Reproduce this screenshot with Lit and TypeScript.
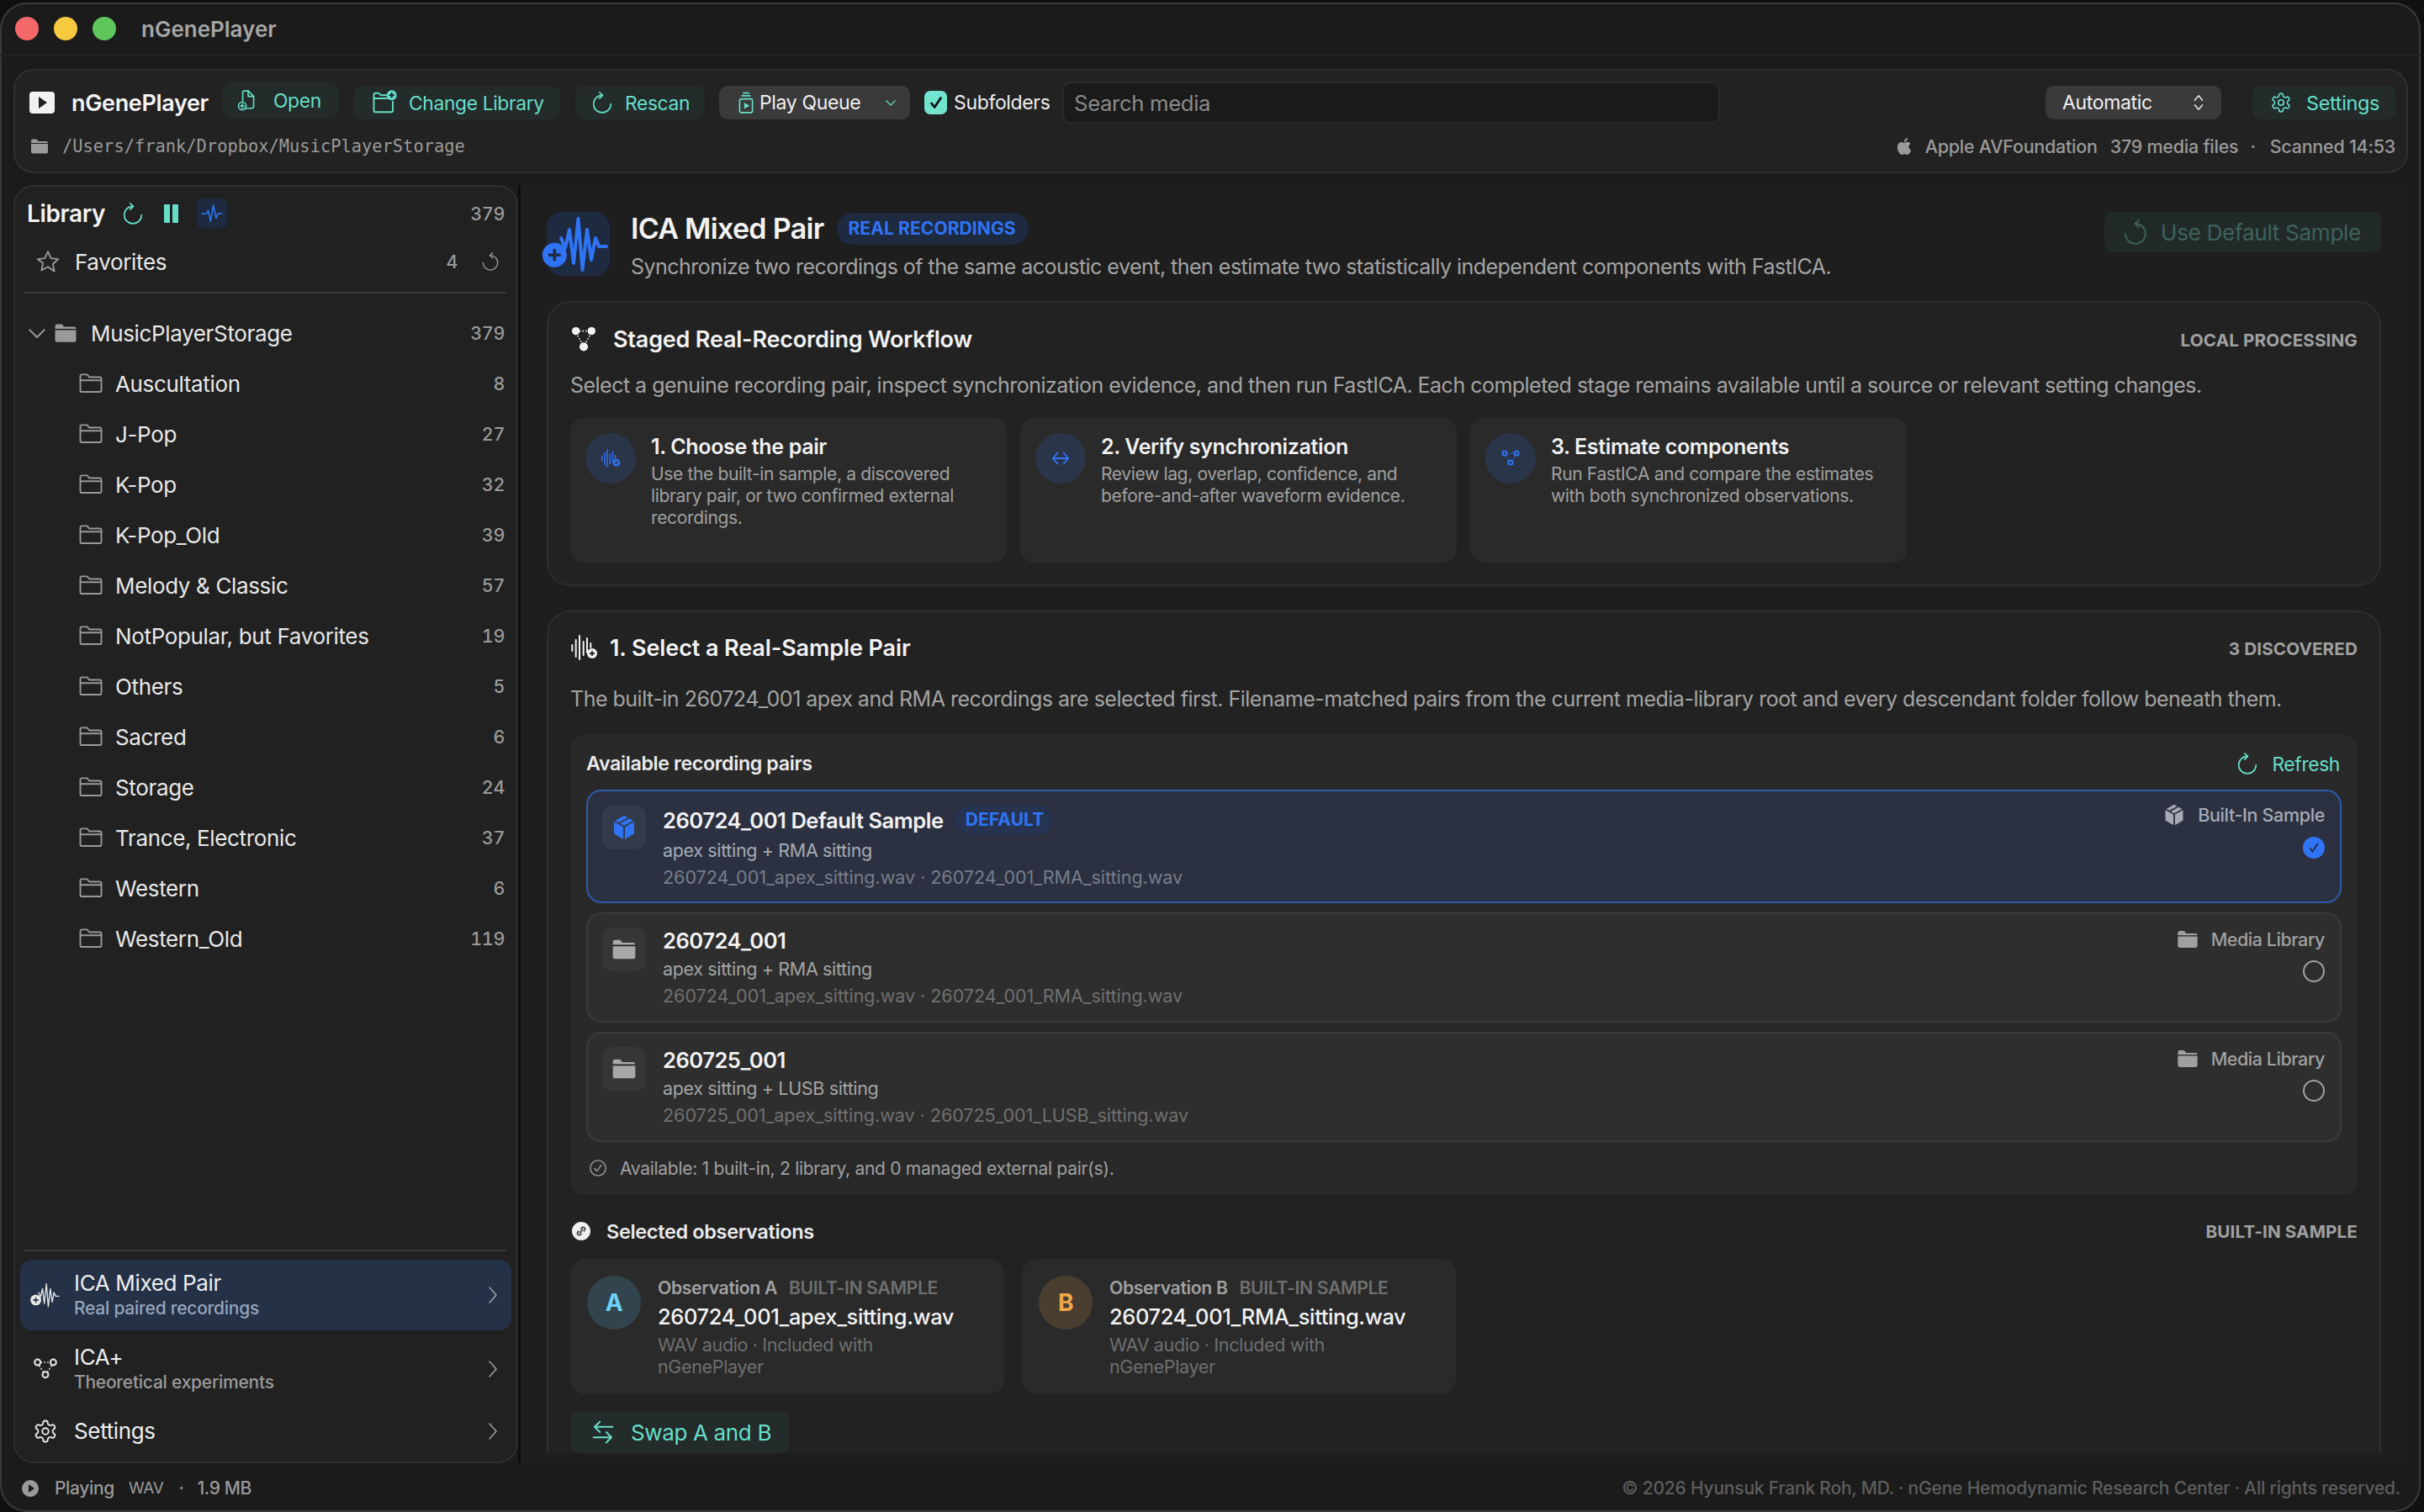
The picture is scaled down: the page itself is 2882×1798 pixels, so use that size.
import { LitElement, html, svg, css } from "lit";
import { customElement } from "lit/decorators.js";

const GEAR =
  "M12.22 2h-.44a2 2 0 0 0-2 2v.18a2 2 0 0 1-1 1.73l-.43.25a2 2 0 0 1-2 0l-.15-.08a2 2 0 0 0-2.73.73l-.22.38a2 2 0 0 0 .73 2.73l.15.1a2 2 0 0 1 1 1.72v.51a2 2 0 0 1-1 1.74l-.15.09a2 2 0 0 0-.73 2.73l.22.38a2 2 0 0 0 2.73.73l.15-.08a2 2 0 0 1 2 0l.43.25a2 2 0 0 1 1 1.73V20a2 2 0 0 0 2 2h.44a2 2 0 0 0 2-2v-.18a2 2 0 0 1 1-1.73l.43-.25a2 2 0 0 1 2 0l.15.08a2 2 0 0 0 2.73-.73l.22-.39a2 2 0 0 0-.73-2.73l-.15-.08a2 2 0 0 1-1-1.74v-.5a2 2 0 0 1 1-1.74l.15-.09a2 2 0 0 0 .73-2.73l-.22-.38a2 2 0 0 0-2.73-.73l-.15.08a2 2 0 0 1-2 0l-.43-.25a2 2 0 0 1-1-1.73V4a2 2 0 0 0-2-2z";
const APPLE =
  "M12.152 6.896c-.948 0-2.415-1.078-3.96-1.04-2.04.027-3.91 1.183-4.961 3.014-2.117 3.675-.546 9.103 1.519 12.09 1.013 1.454 2.208 3.09 3.792 3.039 1.52-.065 2.09-.987 3.935-.987 1.831 0 2.35.987 3.96.948 1.637-.026 2.676-1.48 3.676-2.948 1.156-1.688 1.636-3.325 1.662-3.415-.039-.013-3.182-1.221-3.22-4.857-.026-3.04 2.48-4.494 2.597-4.559-1.429-2.09-3.623-2.324-4.39-2.376-2-.156-3.675 1.09-4.61 1.09zM15.53 3.83c.843-1.012 1.4-2.427 1.245-3.83-1.207.052-2.662.805-3.532 1.818-.78.896-1.454 2.338-1.273 3.714 1.338.104 2.715-.688 3.559-1.701";

const ICONS: Record<string, unknown> = {
  refresh: svg`<path d="M12 4a9.500 9.500 0 1 0 9.500 9.500"></path><path d="M9 .8 12.500 4 9 7.500"></path>`,
  reset: svg`<path d="M12 4a9.500 9.500 0 1 1-9.500 9.500"></path><path d="M15 .8 11.500 4 15 7.500"></path>`,
  docPlus: svg`<path d="M9 21h8a2 2 0 0 0 2-2V8l-6-6H9a2 2 0 0 0-2 2v9"></path><path d="M13 2v6h6"></path><circle cx="6.500" cy="18.500" r="4.200"></circle><path d="M6.500 16.500v4M4.500 18.500h4"></path>`,
  folderPlus: svg`<path d="M14 5H8.500L6.800 3H3.500A1.500 1.500 0 0 0 2 4.500v15A1.500 1.500 0 0 0 3.500 21h15a1.500 1.500 0 0 0 1.500-1.500V11"></path><path d="M2 8h13"></path><circle cx="19" cy="5" fill="currentColor" r="4"></circle><path class="dark" d="M19 3v4M17 5h4"></path>`,
  queue: svg`<path d="M9 1.500h6M7.500 4.500h9"></path><rect x="5" y="8" width="14" height="15" rx="2"></rect><path class="solid" d="M10 12l6 3.500-6 3.500z"></path>`,
  gear: svg`<path d=${GEAR}></path><circle cx="12" cy="12" r="3"></circle>`,
  updown: svg`<path d="M7 9l5-6 5 6M7 15l5 6 5-6"></path>`,
  chevDown: svg`<path d="M5 9l7 7 7-7"></path>`,
  chevRight: svg`<path d="M8 3l8 9-8 9"></path>`,
  star: svg`<path d="M12 2.500l2.900 6.400 6.900.8-5.100 4.700 1.400 6.900L12 17l-6.100 3.300 1.400-6.900L2.200 9.700l6.900-.8z"></path>`,
  pulse: svg`<path d="M1 12h5l2-3.500 2.500 12L13.500 3l3 14 2-5H23"></path>`,
  folder: svg`<path d="M2 7V5a1.500 1.500 0 0 1 1.500-1.500h5L10.500 6h10A1.500 1.500 0 0 1 22 7.500v11a1.500 1.500 0 0 1-1.500 1.500h-17A1.500 1.500 0 0 1 2 18.500V7z"></path><path d="M2 9h20"></path>`,
  folderFill: svg`<path class="solid" d="M2 5.500A2 2 0 0 1 4 3.500h4.500L10.500 6H20a2 2 0 0 1 2 2v10.500a2 2 0 0 1-2 2H4a2 2 0 0 1-2-2z"></path><path class="cut" d="M2 8.500h20"></path>`,
  box: svg`<path class="solid" d="M11.200 11.500 3 7v10.500l8.200 5z"></path><path class="solid" d="M12.800 11.500 21 7v10.500l-8.200 5z"></path><path class="solid" d="M12 1.500l3 1.700-8 4.400-3-1.600zM16.500 4l3.500 2-8 4.400-3.500-1.900z"></path>`,
  check: svg`<path d="M6 13l4 5 8-12"></path>`,
  checkCircle: svg`<circle cx="12" cy="12" r="10"></circle><path d="M7.500 12.500l3 3.500 6-8"></path>`,
  swap: svg`<path d="M21 7H4M9 2 4 7l5 5M3 17h17M15 12l5 5-5 5"></path>`,
  arrows: svg`<path d="M8 5l-6 7 6 7M16 5l6 7-6 7M2 12h20"></path>`,
  nodes: svg`<circle cx="5" cy="6" r="2.600"></circle><circle cx="19" cy="6" r="2.600"></circle><circle cx="12" cy="17" r="2.600"></circle><path class="dash" d="M8 6h8M6.500 9l3.500 5.500M17.500 9 14 14.500"></path>`,
  nodesFill: svg`<circle class="solid" cx="5" cy="5" r="3.500"></circle><circle class="solid" cx="19" cy="5" r="3.500"></circle><circle class="solid" cx="12" cy="19" r="3.800"></circle><path class="dash" d="M8 5h8M6.500 9l4 7M17.500 9l-4 7"></path>`,
};

const icon = (name: string, cls = "") => html`<svg class="ic ${cls}" viewBox="0 0 24 24">${ICONS[name]}</svg>`;

// zigzag waveform with the plus badge, drawn in the hero tile and again small in the nav
const heroWave = (cls: string) => html`
  <svg class="wave ${cls}" viewBox="0 0 100 90">
    <polyline points="31,38 36,50 41,28 46,68 51.500,15 56.500,76 62,28 67,64 72,38 76,48 85,48"></polyline>
    <circle cx="23.300" cy="58.300" r="14.500"></circle>
    <path d="M23.300 51v14.600M16 58.300h14.600"></path>
  </svg>
`;

const BARS: [number, number, number][] = [
  [12.3, 16, 23],
  [16.7, 10, 30],
  [21, 5, 33],
  [25.7, 12, 28],
  [30, 8, 25],
  [34.3, 14, 19],
];

const barsIcon = (cls: string) => html`
  <svg class="bars ${cls}" viewBox="10 4 33 30">
    ${BARS.map(([x, a, b]) => svg`<line x1=${x} x2=${x} y1=${a} y2=${b}></line>`)}
    <circle cx="36" cy="26" r="6"></circle>
    <path d="M36 23v6M33 26h6"></path>
  </svg>
`;

const FOLDERS: [string, number][] = [
  ["Auscultation", 8],
  ["J-Pop", 27],
  ["K-Pop", 32],
  ["K-Pop_Old", 39],
  ["Melody & Classic", 57],
  ["NotPopular, but Favorites", 19],
  ["Others", 5],
  ["Sacred", 6],
  ["Storage", 24],
  ["Trance, Electronic", 37],
  ["Western", 6],
  ["Western_Old", 119],
];

const STEPS = [
  {
    icon: barsIcon("step-bars"),
    title: "1. Choose the pair",
    lines: ["Use the built-in sample, a discovered", "library pair, or two confirmed external", "recordings."],
  },
  {
    icon: icon("arrows", "s22"),
    title: "2. Verify synchronization",
    lines: ["Review lag, overlap, confidence, and", "before-and-after waveform evidence."],
  },
  {
    icon: icon("nodes", "s24"),
    title: "3. Estimate components",
    lines: ["Run FastICA and compare the estimates", "with both synchronized observations."],
  },
];

const PAIRS = [
  {
    title: "260724_001 Default Sample",
    badge: "DEFAULT",
    sub: "apex sitting + RMA sitting",
    files: "260724_001_apex_sitting.wav · 260724_001_RMA_sitting.wav",
    source: "Built-In Sample",
    selected: true,
  },
  {
    title: "260724_001",
    sub: "apex sitting + RMA sitting",
    files: "260724_001_apex_sitting.wav · 260724_001_RMA_sitting.wav",
    source: "Media Library",
  },
  {
    title: "260725_001",
    sub: "apex sitting + LUSB sitting",
    files: "260725_001_apex_sitting.wav · 260725_001_LUSB_sitting.wav",
    source: "Media Library",
  },
];

const OBSERVATIONS = [
  { key: "A", file: "260724_001_apex_sitting.wav" },
  { key: "B", file: "260724_001_RMA_sitting.wav" },
];

@customElement("app-root")
export class AppRoot extends LitElement {
  static styles = css`
    :host {
      display: block;
      width: 2882px;
      height: 1798px;
      overflow: hidden;
      background: #101010;
      font-family: Inter, "Noto Sans", sans-serif;
      color: #ececec;
      font-size: 25px;
      letter-spacing: -0.35px;
    }
    * { box-sizing: border-box; }
    .ic { display: block; flex: none; fill: none; stroke: currentColor; stroke-width: 1.5; stroke-linecap: round; stroke-linejoin: round; overflow: visible; }
    .ic .solid { fill: currentColor; stroke: none; }
    .ic .cut { stroke: #222; stroke-width: 1.2; }
    .ic .dash { stroke-dasharray: 1.2 1.6; stroke-linecap: butt; stroke-width: 1.2; }
    .ic .dark { stroke: #1c2638; stroke-width: 1.6; }
    .s18 { width: 18px; height: 18px; }
    .s20 { width: 20px; height: 20px; }
    .s22 { width: 22px; height: 22px; }
    .s24 { width: 24px; height: 24px; }
    .s26 { width: 26px; height: 26px; }
    .s28 { width: 28px; height: 28px; }
    .s30 { width: 30px; height: 30px; }
    .s32 { width: 32px; height: 32px; }

    .wave { display: block; flex: none; fill: none; stroke: currentColor; overflow: visible; stroke-linecap: round; stroke-linejoin: round; }
    .wave polyline { stroke-width: 4; }
    .wave circle { fill: currentColor; stroke: none; }
    .wave path { stroke: #1e2a40; stroke-width: 3.6; stroke-linecap: butt; }
    .wave.big { width: 100px; height: 90px; position: absolute; left: -14px; top: -7px; }
    .wave.mini { width: 45px; height: 40px; }
    .nav.active .wave path { stroke: #243147; }
    .nav.active .wave polyline { stroke-width: 3; }

    .bars { display: block; flex: none; overflow: visible; fill: none; stroke: currentColor; stroke-width: 2; stroke-linecap: round; }
    .bars circle { fill: currentColor; stroke: none; }
    .bars path { stroke: #222; stroke-width: 1.800; stroke-linecap: butt; }
    .bars.head { width: 33px; height: 30px; }
    .bars.step-bars { width: 24px; height: 22px; }
    .bars.step-bars path { stroke: #2b3549; }

    .window {
      width: 2878px;
      height: 1795px;
      margin-top: 3px;
      background: #1b1b1b;
      border-radius: 32px;
      box-shadow: inset 0 0 0 2px #3a3a3a;
      display: flex;
      flex-direction: column;
      overflow: hidden;
    }
    .titlebar {
      height: 64px;
      flex: none;
      padding-left: 18px;
      display: flex;
      align-items: center;
      gap: 18px;
      border-bottom: 2px solid #232323;
      font-size: 26px;
      font-weight: 600;
      letter-spacing: 0;
      color: #a6a6a6;
    }
    .light { width: 28px; height: 28px; border-radius: 50%; }
    .red { background: #f4686a; }
    .yellow { background: #f6c93f; }
    .green { background: #5fc65c; }
    .titlebar span { margin-left: 12px; }

    .toolbar {
      height: 124px;
      flex: none;
      margin: 15px 15px 14px 16px;
      padding: 13px 13px 0 17px;
      background: #222;
      border: 2px solid #303030;
      border-radius: 24px;
    }
    .tool-row { height: 50px; display: flex; align-items: center; }
    .brand { width: 230px; flex: none; display: flex; align-items: center; gap: 20px; font-size: 27px; font-weight: 600; color: #f4f4f4; }
    .logo { width: 30px; height: 26px; background: #f2f2f2; border-radius: 4px; display: flex; align-items: center; justify-content: center; }
    .logo i { width: 0; height: 0; border-left: 10px solid #222; border-top: 7px solid transparent; border-bottom: 7px solid transparent; margin-left: 2px; }
    .btn {
      height: 40px;
      flex: none;
      display: flex;
      align-items: center;
      background: #232b2b;
      border-radius: 10px;
      color: #67dfc8;
      font-size: 22.800px;
    }
    .btn.open { width: 137px; height: 44px; padding-left: 16px; gap: 18px; margin-top: -6px; }
    .btn.library { width: 246px; padding-left: 22px; gap: 14px; margin-left: 18px; }
    .btn.rescan { width: 154px; padding-left: 19px; gap: 14px; margin-left: 18px; }
    .menu {
      height: 40px;
      flex: none;
      display: flex;
      align-items: center;
      background: #3a3a3a;
      border-radius: 10px;
      color: #f0f0f0;
      font-size: 23px;
    }
    .menu.queue { width: 227px; margin-left: 17px; padding: 0 14px 0 19px; gap: 3px; }
    .menu.queue .ic:first-child { color: #67dfc8; }
    .menu.auto { width: 209px; padding: 0 16px 0 20px; justify-content: space-between; }
    .push { margin-left: auto; }
    .checkbox { width: 27px; height: 28px; flex: none; margin-left: 17px; background: #72e4d0; border-radius: 7px; color: #111; display: flex; align-items: center; justify-content: center; }
    .checkbox .ic { stroke-width: 3; }
    .sub-label { margin-left: 8px; width: 129px; flex: none; font-size: 23px; color: #eee; }
    .search {
      width: 782px;
      height: 50px;
      flex: none;
      padding-left: 12px;
      display: flex;
      align-items: center;
      background: #1a1a1a;
      border: 2px solid #2a2a2a;
      border-radius: 10px;
      color: #8a8a8a;
      font-size: 25.700px;
    }
    .btn.settings { width: 170px; margin-left: 37px; padding-left: 21px; gap: 17px; font-size: 23.500px; }
    .status { height: 36px; margin-top: 9px; display: flex; align-items: center; color: #9a9a9a; font-size: 21.500px; font-weight: 500; letter-spacing: -0.25px; }
    .path { margin-left: 15px; font-family: "DejaVu Sans Mono", "Liberation Mono", monospace; font-size: 20.400px; letter-spacing: 0; color: #9a9a9a; font-weight: 400; }
    .status .apple { width: 20px; height: 24px; fill: #9a9a9a; margin-left: auto; }
    .status span.a { margin-left: 15px; }
    .status span.b { margin-left: 15px; }
    .status span.c { margin: 0 17px 0 14px; }

    .body { height: 1520px; flex: none; display: flex; margin: 0 15px 0 16px; }
    .sidebar {
      width: 600px;
      flex: none;
      display: flex;
      flex-direction: column;
      background: #212121;
      border: 2px solid #2e2e2e;
      border-radius: 24px;
      padding: 14px 14px 6px 10px;
    }
    .lib-head { height: 36px; flex: none; display: flex; align-items: center; padding-left: 4px; }
    .lib-head b { font-size: 28px; font-weight: 600; color: #f4f4f4; }
    .lib-head .refresh { color: #67dfc8; margin-left: 20px; }
    .pause { display: flex; gap: 3px; margin-left: 24px; }
    .pause i { width: 7px; height: 22px; background: #67dfc8; border-radius: 1px; }
    .pulse-box { width: 36px; height: 36px; margin-left: 22px; border-radius: 8px; background: #1e2a40; color: #2f74f5; display: flex; align-items: center; justify-content: center; }
    .count { margin-left: auto; font-size: 21.500px; font-weight: 500; color: #9a9a9a; font-variant-numeric: tabular-nums; }
    .fav { height: 50px; flex: none; margin-top: 14px; display: flex; align-items: center; padding-left: 14px; color: #e8e8e8; }
    .fav .ic:first-child { color: #9a9a9a; }
    .fav .name { margin-left: 17px; font-size: 26px; }
    .fav .reset { margin-left: 28px; margin-right: 6px; color: #9a9a9a; }
    .rule { height: 2px; flex: none; background: #3a3a3a; margin-right: -2px; }
    .rule.top { margin-top: 11px; margin-bottom: 17px; }
    .tree { height: 60px; flex: none; display: flex; align-items: center; font-size: 26px; color: #e8e8e8; }
    .tree .ic { color: #9a9a9a; }
    .tree.root .chev { margin-left: 1px; }
    .tree.root .folder { margin-left: 4px; }
    .tree.root .name { margin-left: 15px; }
    .tree.child .folder { margin-left: 65px; }
    .tree.child .name { margin-left: 14px; }
    .spacer { flex: 1; }
    .nav { display: flex; align-items: center; flex: none; border-radius: 14px; margin-right: -8px; margin-left: -4px; padding-left: 12px; padding-right: 10px; }
    .nav .icon { width: 36px; display: flex; justify-content: center; color: #e8e8e8; margin-right: 16px; }
    .nav .name { font-size: 26px; color: #eee; line-height: 32px; }
    .nav small { display: block; font-size: 21px; font-weight: 500; line-height: 28px; color: #9a9a9a; letter-spacing: -0.25px; }
    .nav .more { margin-left: auto; color: #a0a0a0; }
    .nav.active { height: 84px; margin-top: 10px; background: #243147; }
    .nav.active small { color: #96a5bc; }
    .nav.two { height: 84px; margin-top: 4px; }
    .nav.one { height: 60px; margin-top: 2px; }

    .divider { width: 3px; flex: none; background: #0d0d0d; }
    .content { flex: 1; min-width: 0; background: #1e1e1e; padding: 32px 32px 0 31px; overflow: hidden; }
    .page-head { height: 76px; display: flex; }
    .hero { width: 75px; height: 76px; flex: none; border-radius: 18px; background: #1e2a40; color: #2f74f5; position: relative; }
    .page-title { margin-left: 25px; margin-top: -1px; }
    .title-row { display: flex; align-items: center; height: 40px; }
    .title-row h1 { margin: 0; font-size: 34px; font-weight: 600; color: #f2f2f2; letter-spacing: -0.7px; }
    .badge { background: #1e2a40; color: #2f74f5; font-size: 21px; font-weight: 700; letter-spacing: 0.1px; border-radius: 20px; }
    .title-row .badge { margin-left: 16px; height: 38px; line-height: 38px; padding: 0 15px 0 13px; margin-top: 2px; }
    .page-sub { margin-top: 8px; line-height: 36px; color: #a4a4a4; font-size: 25px; letter-spacing: -0.52px; }
    .btn.default { margin-left: auto; width: 329px; height: 48px; padding-left: 22px; gap: 15px; background: #222a29; color: #3c635b; font-size: 26.200px; border-radius: 10px; }

    .section { margin-top: 30px; padding: 23px 26px 26px; background: #222; border: 2px solid #2e2e2e; border-radius: 28px; }
    .section.rest { margin-top: 29px; padding-top: 22px; padding-bottom: 0; border-bottom: none; border-radius: 28px 28px 0 0; }
    .sec-head { height: 40px; display: flex; align-items: center; gap: 19px; font-size: 27px; font-weight: 600; color: #f2f2f2; letter-spacing: -0.2px; }
    .rest .sec-head { gap: 14px; letter-spacing: -0.1px; }
    .sec-head .tag { margin-left: auto; font-size: 20.700px; font-weight: 700; color: #a0a0a0; letter-spacing: 0.1px; margin-top: 2px; }
    .desc { margin-top: 17px; line-height: 36px; color: #a4a4a4; font-size: 25px; white-space: nowrap; letter-spacing: -0.52px; }
    .rest .desc { margin-top: 23px; letter-spacing: -0.5px; }
    .steps { margin-top: 21px; display: flex; gap: 16px; }
    .step { width: 519px; height: 172px; flex: none; background: #2a2a2a; border-radius: 16px; padding: 18px; display: flex; gap: 18px; }
    .step-icon { width: 60px; height: 60px; flex: none; border-radius: 50%; background: #2b3549; color: #2f74f5; display: flex; align-items: center; justify-content: center; }
    .step-icon .ic { stroke-width: 2; }
    .step h3 { margin: 1px 0 0; font-size: 25px; font-weight: 600; line-height: 30px; color: #f0f0f0; }
    .step p { margin: 5px 0 0; font-size: 21px; line-height: 26px; color: #a0a0a0; white-space: nowrap; }

    .panel { margin-top: 24px; padding: 15px 19px 16px; background: #292929; border-radius: 18px; }
    .panel-head { height: 40px; display: flex; align-items: center; font-size: 23.200px; font-weight: 600; color: #eaeaea; }
    .refresh-link { margin-left: auto; display: flex; align-items: center; gap: 16px; color: #67dfc8; font-weight: 400; font-size: 22.800px; margin-right: 2px; }
    .pairs { margin-top: 11px; display: flex; flex-direction: column; gap: 11px; }
    .pair { height: 131px; flex: none; display: flex; padding: 16px 18px 0 17px; background: #2e2e2e; border: 2px solid #3a3a3a; border-radius: 18px; }
    .pair.on { height: 135px; padding-top: 17px; background: #2b3140; border-color: #2f5aa8; }
    .pair-icon { width: 52px; height: 52px; flex: none; border-radius: 12px; background: #363636; color: #a8a8a8; display: flex; align-items: center; justify-content: center; }
    .pair.on .pair-icon { background: #333a4a; color: #2f74f5; }
    .pair-text { margin-left: 20px; }
    .pair-title { height: 30px; display: flex; align-items: center; font-size: 25.500px; font-weight: 600; color: #f2f2f2; letter-spacing: -0.45px; }
    .pair.on .pair-title { height: 34px; }
    .pair-title .badge { margin-left: 14px; height: 34px; line-height: 34px; padding: 0 12px; background: #263452; }
    .pair-sub { margin-top: 5px; font-size: 21.500px; line-height: 28px; color: #a4a4a4; }
    .pair-files { margin-top: 4px; font-size: 21.500px; line-height: 28px; color: #707070; letter-spacing: -0.02px; }
    .pair.on .pair-files { color: #777d8c; }
    .pair.on .pair-sub { color: #a6aab5; }
    .pair-side { margin-left: auto; display: flex; flex-direction: column; align-items: flex-end; }
    .source { height: 28px; display: flex; align-items: center; gap: 14px; font-size: 21.500px; font-weight: 500; color: #a0a0a0; letter-spacing: -0.45px; }
    .pair.on .source { color: #a6aab5; margin-top: -3px; margin-bottom: 1px; letter-spacing: -0.35px; }
    .radio { width: 26px; height: 26px; margin-top: 11px; border-radius: 50%; border: 2px solid #a0a0a0; }
    .radio.on { border: none; background: #2f74f5; color: #1c2638; display: flex; align-items: center; justify-content: center; }
    .radio .ic { stroke-width: 2.200; }
    .avail { margin-top: 15px; height: 32px; display: flex; align-items: center; gap: 15px; padding-left: 3px; font-size: 21px; color: #a0a0a0; letter-spacing: -0.28px; }

    .sel-head { margin-top: 23px; height: 40px; display: flex; align-items: center; gap: 19px; font-size: 23.500px; font-weight: 600; color: #eaeaea; padding-left: 2px; }
    .sel-head .tag { margin-left: auto; font-size: 20.700px; font-weight: 700; color: #a0a0a0; letter-spacing: 0.1px; }
    .obs-row { margin-top: 13px; display: flex; gap: 21px; }
    .obs { width: 516px; height: 161px; flex: none; padding: 20px 20px 0; background: #2a2a2a; border-radius: 18px; display: flex; gap: 20px; }
    .obs-key { width: 64px; height: 64px; flex: none; border-radius: 50%; display: flex; align-items: center; justify-content: center; font-size: 28px; font-weight: 700; }
    .obs-key.A { background: #32444d; color: #6fd0f5; }
    .obs-key.B { background: #4a3e30; color: #f2a54a; }
    .obs-label { height: 28px; display: flex; align-items: center; gap: 14px; font-size: 21.200px; font-weight: 600; color: #a0a0a0; }
    .obs-label span { color: #6f6f6f; font-weight: 600; }
    .obs-file { margin-top: 5px; height: 32px; line-height: 32px; font-size: 25.400px; font-weight: 500; color: #f2f2f2; }
    .obs-meta { margin-top: 4px; font-size: 21.500px; line-height: 26px; color: #6f6f6f; }
    .btn.swap { margin-top: 20px; width: 261px; height: 50px; padding-left: 24px; gap: 18px; font-size: 26px; border-radius: 12px; }

    .footer { height: 55px; flex: none; display: flex; align-items: center; padding: 4px 24px 0 26px; font-size: 21px; font-weight: 500; color: #9a9a9a; }
    .footer-play { width: 20px; height: 20px; border-radius: 50%; background: #9a9a9a; display: flex; align-items: center; justify-content: center; }
    .footer-play i { width: 0; height: 0; border-left: 7px solid #1b1b1b; border-top: 5px solid transparent; border-bottom: 5px solid transparent; margin-left: 2px; }
    .footer .playing { margin-left: 19px; }
    .footer .fmt { margin-left: 17px; font-size: 19px; font-weight: 400; }
    .footer .dot { margin: 0 16px 0 18px; }
    .footer .copy { margin-left: auto; color: #5e5e5e; font-weight: 500; letter-spacing: -0.2px; }
  `;

  renderSidebar() {
    return html`
      <aside class="sidebar">
        <div class="lib-head">
          <b>Library</b>
          ${icon("refresh", "s26 refresh")}
          <span class="pause"><i></i><i></i></span>
          <span class="pulse-box">${icon("pulse", "s26")}</span>
          <span class="count">379</span>
        </div>
        <div class="fav">
          ${icon("star", "s30")}
          <span class="name">Favorites</span>
          <span class="count">4</span>
          ${icon("reset", "s22 reset")}
        </div>
        <div class="rule top"></div>
        <div class="tree root">
          ${icon("chevDown", "s30 chev")}
          ${icon("folderFill", "s30 folder")}
          <span class="name">MusicPlayerStorage</span>
          <span class="count">379</span>
        </div>
        ${FOLDERS.map(
          ([name, n]) => html`
            <div class="tree child">
              ${icon("folder", "s30 folder")}
              <span class="name">${name}</span>
              <span class="count">${n}</span>
            </div>
          `,
        )}
        <div class="spacer"></div>
        <div class="rule"></div>
        <div class="nav active">
          <span class="icon">${heroWave("mini")}</span>
          <div class="name">ICA Mixed Pair<small>Real paired recordings</small></div>
          ${icon("chevRight", "s24 more")}
        </div>
        <div class="nav two">
          <span class="icon">${icon("nodes", "s32")}</span>
          <div class="name">ICA+<small>Theoretical experiments</small></div>
          ${icon("chevRight", "s24 more")}
        </div>
        <div class="nav one">
          <span class="icon">${icon("gear", "s30")}</span>
          <div class="name">Settings</div>
          ${icon("chevRight", "s24 more")}
        </div>
      </aside>
    `;
  }

  renderPair(p: (typeof PAIRS)[number]) {
    const iconName = p.selected ? "box" : "folderFill";
    return html`
      <div class="pair ${p.selected ? "on" : ""}">
        <div class="pair-icon">${icon(iconName, "s32")}</div>
        <div class="pair-text">
          <div class="pair-title">${p.title}${p.badge ? html`<span class="badge">${p.badge}</span>` : ""}</div>
          <div class="pair-sub">${p.sub}</div>
          <div class="pair-files">${p.files}</div>
        </div>
        <div class="pair-side">
          <div class="source">${icon(iconName, "s28")}${p.source}</div>
          ${p.selected
            ? html`<div class="radio on">${icon("check", "s18")}</div>`
            : html`<div class="radio"></div>`}
        </div>
      </div>
    `;
  }

  renderContent() {
    return html`
      <main class="content">
        <header class="page-head">
          <div class="hero">${heroWave("big")}</div>
          <div class="page-title">
            <div class="title-row">
              <h1>ICA Mixed Pair</h1>
              <span class="badge">REAL RECORDINGS</span>
            </div>
            <div class="page-sub">
              Synchronize two recordings of the same acoustic event, then estimate two statistically independent
              components with FastICA.
            </div>
          </div>
          <div class="btn default">${icon("reset", "s30")}Use Default Sample</div>
        </header>

        <section class="section">
          <div class="sec-head">
            ${icon("nodesFill", "s32")}
            Staged Real-Recording Workflow
            <span class="tag">LOCAL PROCESSING</span>
          </div>
          <div class="desc">
            Select a genuine recording pair, inspect synchronization evidence, and then run FastICA. Each completed
            stage remains available until a source or relevant setting changes.
          </div>
          <div class="steps">
            ${STEPS.map(
              (s) => html`
                <div class="step">
                  <div class="step-icon">${s.icon}</div>
                  <div>
                    <h3>${s.title}</h3>
                    <p>${s.lines.map((l) => html`${l}<br />`)}</p>
                  </div>
                </div>
              `,
            )}
          </div>
        </section>

        <section class="section rest">
          <div class="sec-head">
            ${barsIcon("head")}
            1. Select a Real-Sample Pair
            <span class="tag">3 DISCOVERED</span>
          </div>
          <div class="desc">
            The built-in 260724_001 apex and RMA recordings are selected first. Filename-matched pairs from the current
            media-library root and every descendant folder follow beneath them.
          </div>
          <div class="panel">
            <div class="panel-head">
              Available recording pairs
              <span class="refresh-link">${icon("refresh", "s26")}Refresh</span>
            </div>
            <div class="pairs">${PAIRS.map((p) => this.renderPair(p))}</div>
            <div class="avail">
              ${icon("checkCircle", "s22")} Available: 1 built-in, 2 library, and 0 managed external pair(s).
            </div>
          </div>
          <div class="sel-head">
            <svg class="ic s22" viewBox="0 0 24 24">
              <circle cx="12" cy="12" r="12" fill="#eee" stroke="none"></circle>
              <path stroke="#222" d="M10 14.500l4-5M8.500 12l-1 1.300a2.500 2.500 0 0 0 3.800 3.200l1-1.300M15.500 12l1-1.300a2.500 2.500 0 0 0-3.800-3.200l-1 1.300"></path>
            </svg>
            Selected observations
            <span class="tag">BUILT-IN SAMPLE</span>
          </div>
          <div class="obs-row">
            ${OBSERVATIONS.map(
              (o) => html`
                <div class="obs">
                  <div class="obs-key ${o.key}">${o.key}</div>
                  <div>
                    <div class="obs-label">Observation ${o.key}<span>BUILT-IN SAMPLE</span></div>
                    <div class="obs-file">${o.file}</div>
                    <div class="obs-meta">WAV audio · Included with<br />nGenePlayer</div>
                  </div>
                </div>
              `,
            )}
          </div>
          <div class="btn swap">${icon("swap", "s30")}Swap A and B</div>
        </section>
      </main>
    `;
  }

  render() {
    return html`
      <div class="window">
        <div class="titlebar">
          <i class="light red"></i><i class="light yellow"></i><i class="light green"></i>
          <span>nGenePlayer</span>
        </div>
        <div class="toolbar">
          <div class="tool-row">
            <div class="brand"><span class="logo"><i></i></span>nGenePlayer</div>
            <div class="btn open">${icon("docPlus", "s26")}Open</div>
            <div class="btn library">${icon("folderPlus", "s30")}Change Library</div>
            <div class="btn rescan">${icon("refresh", "s26")}Rescan</div>
            <div class="menu queue">${icon("queue", "s26")}Play Queue<span class="push">${icon("chevDown", "s18")}</span></div>
            <div class="checkbox">${icon("check", "s22")}</div>
            <div class="sub-label">Subfolders</div>
            <div class="search">Search media</div>
            <div class="menu auto push">Automatic${icon("updown", "s22")}</div>
            <div class="btn settings">${icon("gear", "s26")}Settings</div>
          </div>
          <div class="status">
            ${icon("folderFill", "s24")}
            <span class="path">/Users/frank/Dropbox/MusicPlayerStorage</span>
            <svg class="apple" viewBox="0 0 24 24"><path d=${APPLE}></path></svg>
            <span class="a">Apple AVFoundation</span>
            <span class="b">379 media files</span>
            <span class="c">·</span>
            <span>Scanned 14:53</span>
          </div>
        </div>
        <div class="body">
          ${this.renderSidebar()}
          <div class="divider"></div>
          ${this.renderContent()}
        </div>
        <footer class="footer">
          <span class="footer-play"><i></i></span>
          <span class="playing">Playing</span>
          <span class="fmt">WAV</span>
          <span class="dot">·</span>
          <span>1.9 MB</span>
          <span class="copy">© 2026 Hyunsuk Frank Roh, MD. · nGene Hemodynamic Research Center · All rights reserved.</span>
        </footer>
      </div>
    `;
  }
}
